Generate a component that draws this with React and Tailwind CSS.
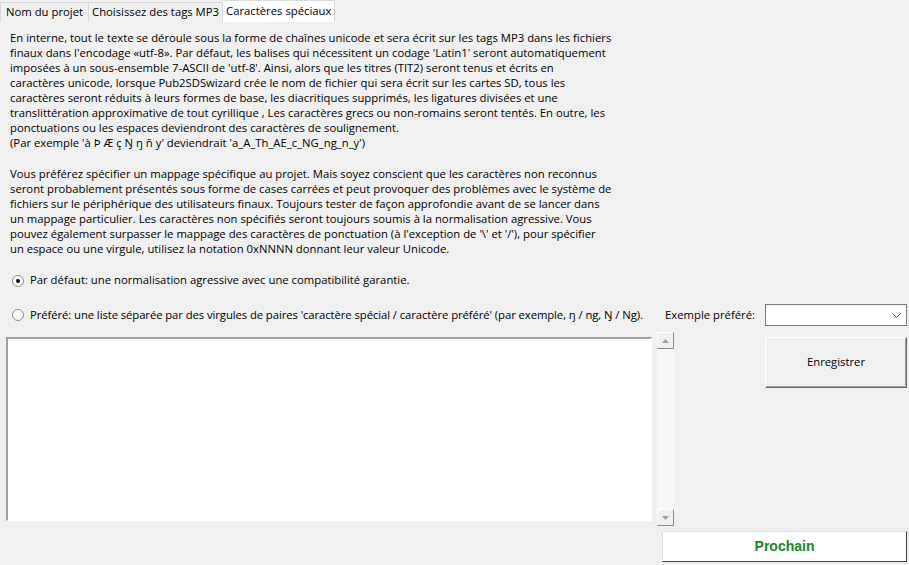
import React from "react";

const p1 = [
  "En interne, tout le texte se déroule sous la forme de chaînes unicode et sera écrit sur les tags MP3 dans les fichiers",
  "finaux dans l'encodage «utf-8». Par défaut, les balises qui nécessitent un codage 'Latin1' seront automatiquement",
  "imposées à un sous-ensemble 7-ASCII de 'utf-8'. Ainsi, alors que les titres (TIT2) seront tenus et écrits en",
  "caractères unicode, lorsque Pub2SDSwizard crée le nom de fichier qui sera écrit sur les cartes SD, tous les",
  "caractères seront réduits à leurs formes de base, les diacritiques supprimés, les ligatures divisées et une",
  "translittération approximative de tout cyrillique , Les caractères grecs ou non-romains seront tentés. En outre, les",
  "ponctuations ou les espaces deviendront des caractères de soulignement.",
  "(Par exemple 'à Þ Æ ç Ŋ ŋ ñ y' deviendrait 'a_A_Th_AE_c_NG_ng_n_y')",
];

const p2 = [
  "Vous préférez spécifier un mappage spécifique au projet. Mais soyez conscient que les caractères non reconnus",
  "seront probablement présentés sous forme de cases carrées et peut provoquer des problèmes avec le système de",
  "fichiers sur le périphérique des utilisateurs finaux. Toujours tester de façon approfondie avant de se lancer dans",
  "un mappage particulier. Les caractères non spécifiés seront toujours soumis à la normalisation agressive. Vous",
  "pouvez également surpasser le mappage des caractères de ponctuation (à l'exception de '\\' et '/'), pour spécifier",
  "un espace ou une virgule, utilisez la notation 0xNNNN donnant leur valeur Unicode.",
];

function Radio({ checked }) {
  return (
    <span className="w-[12px] h-[12px] rounded-full border border-[#8a8a8a] bg-white flex items-center justify-center shrink-0">
      {checked && <span className="w-[4px] h-[4px] rounded-full bg-black" />}
    </span>
  );
}

function Arrow({ up }) {
  return (
    <div className="w-[17px] h-[17px] bg-[#f0f0f0] border border-t-white border-l-white border-r-[#8a8a8a] border-b-[#8a8a8a] flex items-center justify-center">
      <svg width="7" height="4" viewBox="0 0 7 4">
        {up ? (
          <polygon points="0,4 7,4 3.5,0" fill="#a0a0a0" />
        ) : (
          <polygon points="0,0 7,0 3.5,4" fill="#a0a0a0" />
        )}
      </svg>
    </div>
  );
}

export default function App() {
  return (
    <div
      className="w-[909px] h-[565px] bg-[#f0f0f0] text-black text-[11.3px] overflow-hidden"
      style={{ fontFamily: "'Open Sans', 'Noto Sans', sans-serif" }}
    >
      {/* tabs */}
      <div className="h-[22px] flex items-end">
        <div className="h-[20px] px-[5px] flex items-center border border-b-0 border-[#d9d9d9] bg-[#f0f0f0]">
          Nom du projet
        </div>
        <div className="h-[20px] px-[3px] flex items-center border border-l-0 border-b-0 border-[#d9d9d9] bg-[#f0f0f0]">
          Choisissez des tags MP3
        </div>
        <div className="h-[22px] px-[3px] flex items-center border border-l-0 border-b-0 border-[#d9d9d9] bg-white">
          Caractères spéciaux
        </div>
        <div className="flex-1 h-[1px]" />
      </div>

      <div className="pl-[10px] pt-[8px] leading-[15px]">
        {p1.map((l, i) => (
          <div key={i} className="whitespace-nowrap">
            {l}
          </div>
        ))}
        <div className="h-[16px]" />
        {p2.map((l, i) => (
          <div key={i} className="whitespace-nowrap">
            {l}
          </div>
        ))}
      </div>

      <div className="pl-[12px] mt-[17px] flex items-center gap-[6px] h-[15px]">
        <Radio checked />
        <span>Par défaut: une normalisation agressive avec une compatibilité garantie.</span>
      </div>

      <div className="mt-[16px] flex items-center h-[22px]">
        <div className="pl-[12px] flex items-center gap-[6px] w-[665px]">
          <Radio />
          <span className="whitespace-nowrap tracking-[-0.08px]">
            Préféré: une liste séparée par des virgules de paires 'caractère spécial / caractère préféré' (par exemple, ŋ / ng, Ŋ / Ng).
          </span>
        </div>
        <span className="w-[100px]">Exemple préféré:</span>
        <div className="w-[142px] h-[22px] bg-white border border-[#7a7a7a] flex items-center justify-end pr-[5px]">
          <svg width="9" height="5" viewBox="0 0 9 5">
            <polyline points="0.5,0.5 4.5,4.5 8.5,0.5" fill="none" stroke="#555" strokeWidth="1" />
          </svg>
        </div>
      </div>

      <div className="mt-[6px] flex">
        <div className="ml-[6px] mt-[5px] w-[646px] h-[184px] bg-white border-t-2 border-l-2 border-t-[#a0a0a0] border-l-[#a0a0a0] border-r border-b border-r-white border-b-white" />
        <div className="ml-[5px] w-[17px] h-[194px] flex flex-col bg-[#f7f7f7]">
          <Arrow up />
          <div className="flex-1" />
          <Arrow />
        </div>
        <div className="ml-[91px] mt-[5px] w-[142px] h-[51px] bg-[#f0f0f0] border border-t-white border-l-white border-r-[#696969] border-b-[#696969] flex items-center justify-center shadow-[inset_-1px_-1px_0_#a0a0a0]">
          Enregistrer
        </div>
      </div>

      <div className="mt-[5px] flex justify-end pr-[2px]">
        <div
          className="w-[245px] h-[31px] bg-white border border-t-[#e0e0e0] border-l-[#e0e0e0] border-r-[#404040] border-b-[#404040] flex items-center justify-center text-[14px] font-bold text-[#178a17]"
          style={{ fontFamily: "'Liberation Sans', Arial, sans-serif" }}
        >
          Prochain
        </div>
      </div>
    </div>
  );
}
